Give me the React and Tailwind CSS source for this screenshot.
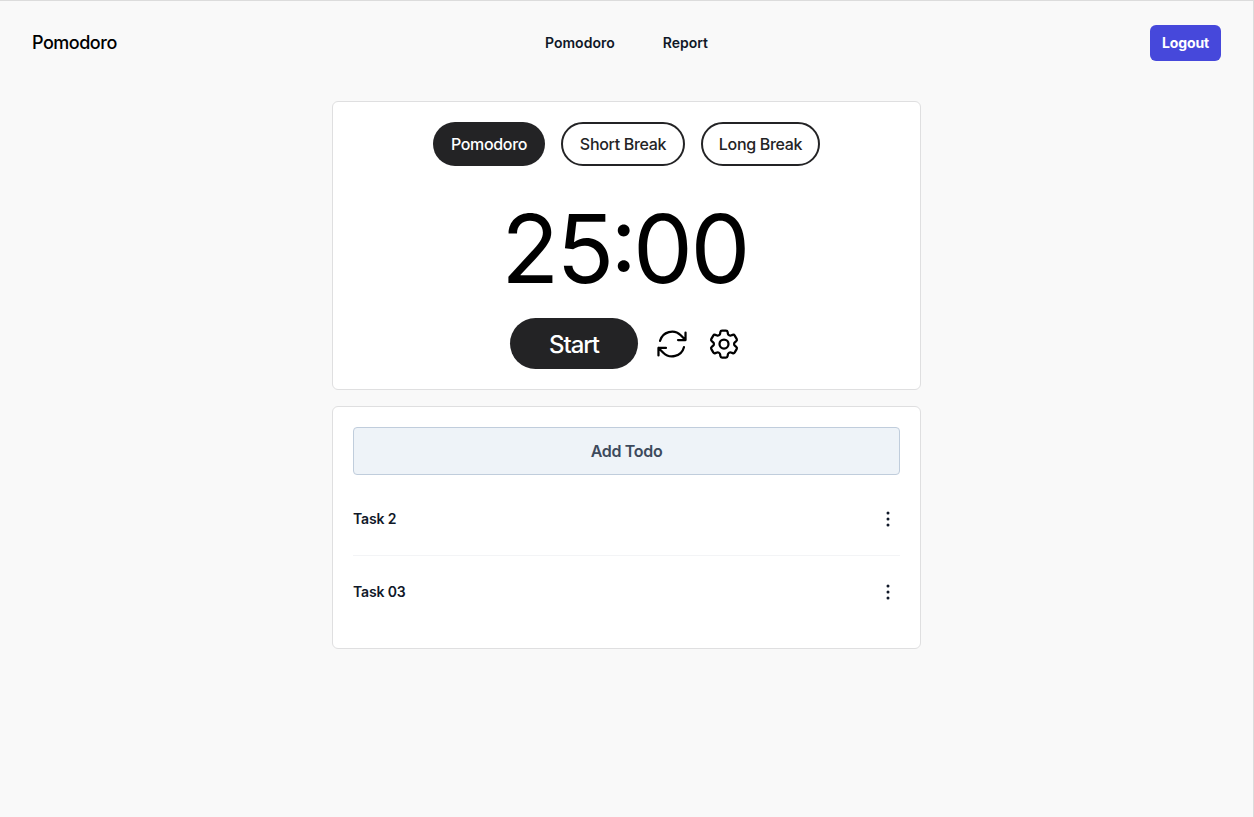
import { HiOutlineArrowPath, HiOutlineCog6Tooth, HiOutlineEllipsisVertical } from "react-icons/hi2";

const tasks = ["Task 2", "Task 03"];

function Header() {
  return (
    <header className="flex h-[84px] items-center px-8">
      <div className="flex flex-1">
        <a className="text-lg font-medium tracking-[-0.027em] text-black">Pomodoro</a>
      </div>
      <nav className="flex gap-12 text-sm leading-6 font-semibold text-gray-900">
        <a>Pomodoro</a>
        <a>Report</a>
      </nav>
      <div className="flex flex-1 justify-end">
        <button className="h-9 w-[71px] rounded-md bg-[#4648db] text-center text-sm font-bold tracking-[-0.01em] text-white">Logout</button>
      </div>
    </header>
  );
}

function Timer() {
  return (
    <section className="flex h-[289px] flex-col items-center rounded-md border border-[#dfdfe0] bg-white p-5">
      <div className="flex gap-4 font-medium tracking-[-0.02em]">
        <button className="h-11 w-28 rounded-full bg-[#232325] text-white">Pomodoro</button>
        <button className="h-11 w-31 rounded-full border-2 border-[#232325] text-[#232325]">Short Break</button>
        <button className="h-11 w-[119px] rounded-full border-2 border-[#232325] text-[#232325]">Long Break</button>
      </div>
      <div className="mt-[34px] mr-1 flex h-24 items-center text-[95px] leading-none tracking-[-0.027em] text-black">
        <span>25</span>
        <span className="-mx-px -translate-y-[9px] text-[90px]">:</span>
        <span>00</span>
      </div>
      <div className="mt-[22px] mr-[2px] flex items-center gap-4 text-black">
        <button className="h-[51px] w-32 rounded-full bg-[#232325] pt-0.5 pl-px text-2xl font-medium tracking-[-0.045em] text-white">Start</button>
        <HiOutlineArrowPath className="size-9" />
        <HiOutlineCog6Tooth className="size-9" />
      </div>
    </section>
  );
}

function TodoList() {
  return (
    <section className="h-[243px] rounded-md border border-[#dfdfe0] bg-white p-5">
      <button className="h-12 w-full rounded-sm border border-[#c0cddc] bg-[#eef3f8] font-semibold tracking-[-0.02em] text-[#3d4a5c]">Add Todo</button>
      <ul className="mt-2 divide-y divide-gray-100">
        {tasks.map((task) => (
          <li key={task} className="flex h-[73px] items-center justify-between text-sm font-semibold tracking-[-0.01em] text-gray-900 last:h-[72px]">
            <span>{task}</span>
            <HiOutlineEllipsisVertical className="size-6" />
          </li>
        ))}
      </ul>
    </section>
  );
}

export default function App() {
  return (
    <div className="h-[817px] border-t border-r border-[#dcdcdc] bg-[#f9f9f9] font-['Inter',sans-serif]">
      <Header />
      <main className="mx-auto mt-4 flex w-[589px] flex-col gap-4">
        <Timer />
        <TodoList />
      </main>
    </div>
  );
}
